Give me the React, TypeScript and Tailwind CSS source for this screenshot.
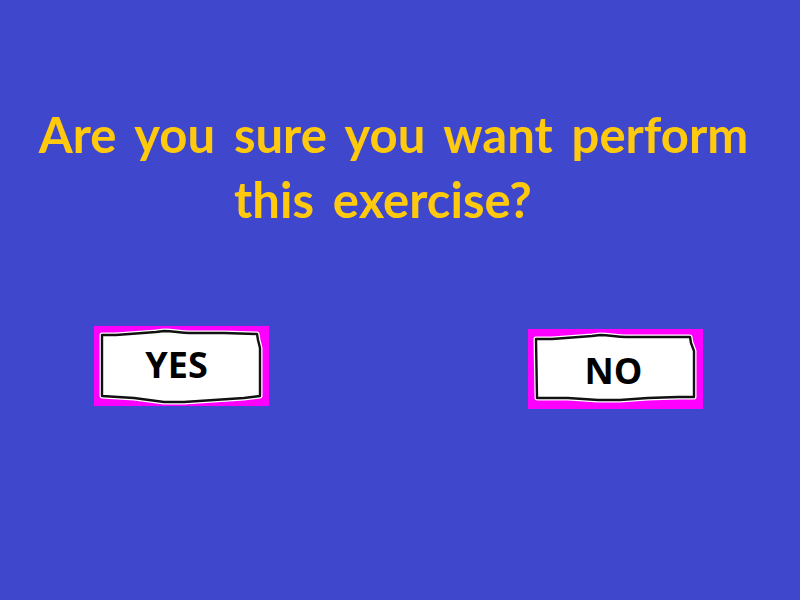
import React from 'react';

interface ChoiceProps {
  label: string;
  frame: string;
  textClass: string;
}

// hand-drawn, slightly torn white card sitting on a magenta plate
function Choice({ label, frame, textClass }: ChoiceProps) {
  return (
    <button className="relative w-[175px] h-[80px] bg-[#ff00ff] cursor-pointer">
      <svg className="absolute inset-0 w-full h-full" viewBox="0 0 175 80" fill="none">
        <path d={frame} fill="#ffffff" stroke="#ffffff" strokeWidth={5} strokeLinejoin="round" />
        <path d={frame} stroke="#111111" strokeWidth={2.4} strokeLinejoin="round" />
      </svg>
      <span
        className={`relative block text-black font-bold text-[36px] leading-none ${textClass}`}
        style={{ fontFamily: '"Open Sans", "Liberation Sans", sans-serif' }}
      >
        {label}
      </span>
    </button>
  );
}

const yesFrame =
  'M8,9 L22,9 C36,8 50,7 62,6 L70,5 C80,5 86,7 96,7 L130,7 L163,8 L164,14 L166,22 L166,70 L150,72 L120,74 L90,76 L70,76 L40,72 L8,70 Z';
const noFrame =
  'M8,10 L24,10 C38,9 52,8 64,7 L72,6 C82,6 88,8 98,8 L132,8 L162,8 L163,14 L166,22 L166,68 L150,68 L120,69 L92,71 L70,71 L40,69 L9,69 Z';

export default function App() {
  return (
    <div className="w-[800px] h-[600px] bg-[#3f48cc] overflow-hidden">
      {/* Question */}
      <div
        className="pt-[102px] pr-[13px] text-center text-[#ffc90e] font-bold text-[49px] leading-[65px] [word-spacing:7px]"
        style={{ fontFamily: 'Lato, "Open Sans", sans-serif' }}
      >
        <p>Are you sure you want perform</p>
        <p className="pr-[21px]">this exercise?</p>
      </div>

      {/* Answers */}
      <div className="flex items-start justify-between pl-[94px] pr-[97px] pt-[94px]">
        <Choice label="YES" frame={yesFrame} textClass="-ml-[10px] -mt-[2px]" />
        <div className="mt-[3px]">
          <Choice label="NO" frame={noFrame} textClass="-ml-[4px] mt-[4px]" />
        </div>
      </div>
    </div>
  );
}
